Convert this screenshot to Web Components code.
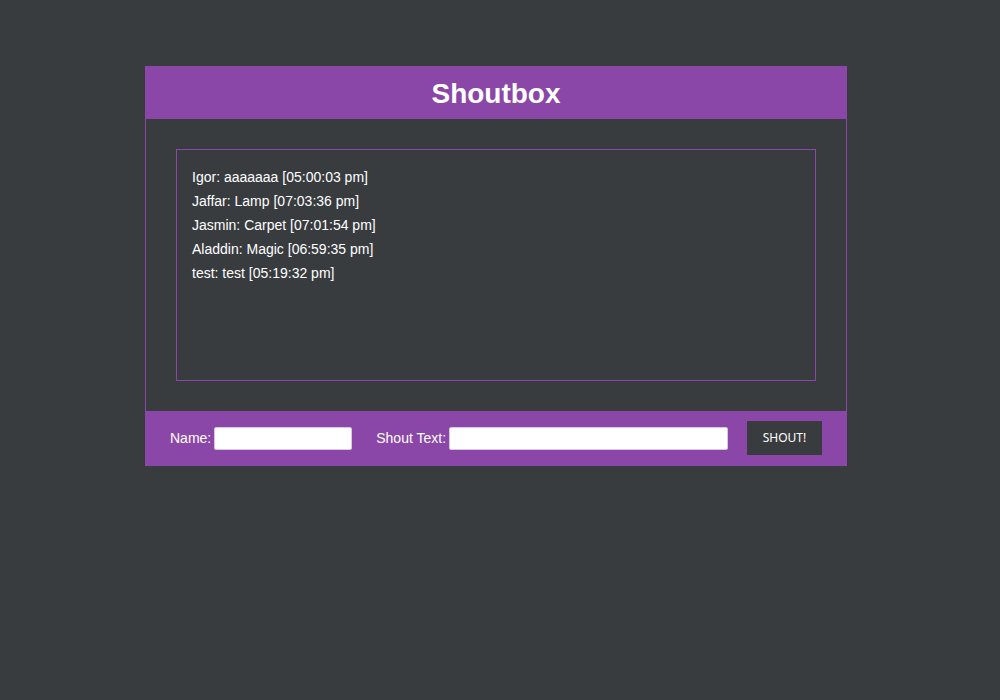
<!DOCTYPE html>
<html lang="en">
<head>
<meta charset="utf-8">
<meta name="viewport" content="width=device-width, initial-scale=1">
<title>Shoutbox</title>
<style>
  html { background: #393c3f; }
  body {
    --accent: #8b47a7;
    --ground: #393c3f;
    margin: 0 8px 0 0;
    padding-top: 66px;
    color: #fff;
    font: 14px/24px "Liberation Sans", Arial, sans-serif;
  }
</style>
</head>
<body>
<shout-box heading="Shoutbox">
  <shout-item name="Igor" time="05:00:03 pm">aaaaaaa</shout-item>
  <shout-item name="Jaffar" time="07:03:36 pm">Lamp</shout-item>
  <shout-item name="Jasmin" time="07:01:54 pm">Carpet</shout-item>
  <shout-item name="Aladdin" time="06:59:35 pm">Magic</shout-item>
  <shout-item name="test" time="05:19:32 pm">test</shout-item>
  <shout-form slot="footer"></shout-form>
</shout-box>

<template id="shout-box">
  <style>
    :host {
      display: block;
      box-sizing: border-box;
      max-width: 702px;
      margin: 0 auto;
      border: 1px solid var(--accent);
    }
    header { background: var(--accent); padding: 10px; text-align: center; }
    h1 { margin: 0; padding-top: 1px; font-size: 28px; line-height: 31px; }
    main { padding: 30px; background: var(--ground); }
    .shouts {
      box-sizing: border-box;
      min-height: 232px;
      padding: 15px;
      border: 1px solid var(--accent);
    }
    footer { background: var(--accent); padding: 10px 24px; }
  </style>
  <header><h1></h1></header>
  <main><div class="shouts" role="list"><slot></slot></div></main>
  <footer><slot name="footer"></slot></footer>
</template>

<template id="shout-item">
  <style>:host { display: block; }</style>
  <span class="name"></span>: <slot></slot> [<time></time>]
</template>

<template id="shout-form">
  <style>
    :host { display: block; }
    form { display: flex; flex-wrap: wrap; align-items: center; }
    label { margin-right: 3px; }
    input {
      box-sizing: border-box;
      height: 23px;
      min-width: 0;
      padding: 2px;
      border: 1px solid #d9c8e1;
      border-radius: 2px;
      background: #fff;
      font: inherit;
    }
    #name { width: 138px; margin-right: 24px; }
    #text { flex: 1 1 160px; margin-right: 19px; }
    button {
      height: 34px;
      min-width: 75px;
      padding: 0 15px;
      border: 0;
      background: var(--ground);
      color: #fff;
      font: 12px/16px "Noto Sans", sans-serif;
      cursor: pointer;
    }
  </style>
  <form>
    <label for="name">Name:</label><input type="text" id="name">
    <label for="text">Shout Text:</label><input type="text" id="text">
    <button type="button">SHOUT!</button>
  </form>
</template>

<script>
  class TemplateElement extends HTMLElement {
    constructor() {
      super();
      this.attachShadow({ mode: "open" });
      this.shadowRoot.append(document.getElementById(this.localName).content.cloneNode(true));
    }
  }

  class ShoutBox extends TemplateElement {
    connectedCallback() {
      this.shadowRoot.querySelector("h1").textContent = this.getAttribute("heading");
    }
  }

  class ShoutItem extends TemplateElement {
    connectedCallback() {
      this.setAttribute("role", "listitem");
      this.shadowRoot.querySelector(".name").textContent = this.getAttribute("name");
      this.shadowRoot.querySelector("time").textContent = this.getAttribute("time");
    }
  }

  class ShoutForm extends TemplateElement {}

  customElements.define("shout-box", ShoutBox);
  customElements.define("shout-item", ShoutItem);
  customElements.define("shout-form", ShoutForm);
</script>
</body>
</html>
